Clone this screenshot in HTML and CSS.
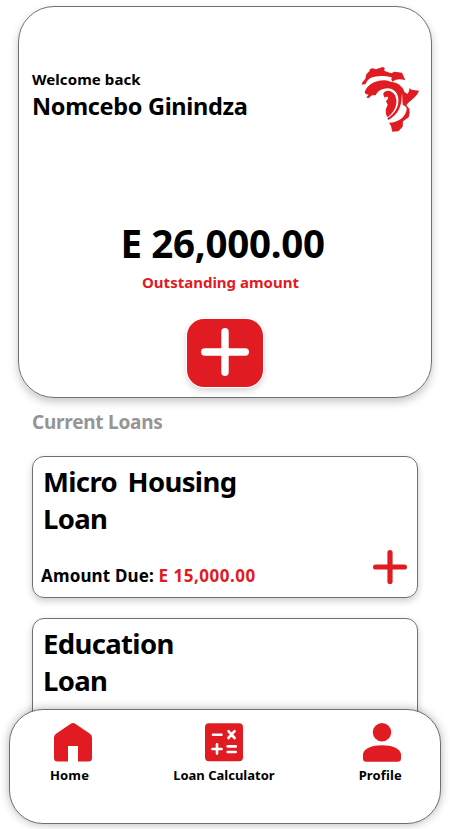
FILE: index.html
```html
<!DOCTYPE html>
<html lang="en">
<head>
<meta charset="utf-8">
<meta name="viewport" content="width=device-width, initial-scale=1">
<title>Loans</title>
<link rel="stylesheet" href="styles.css">
</head>
<body>
<main class="screen">
  <section class="hero">
    <header class="hero-head">
      <div>
        <p class="welcome">Welcome back</p>
        <h1 class="name">Nomcebo Ginindza</h1>
      </div>
      <svg class="logo" viewBox="33 33 180 201" aria-hidden="true">
        <path d="M35 89L37 82L46 71L49 58L58 49L60 42L67 40L78 43L98 36L104 38L103 47L110 50L124 55L133 50L145 52L156 53L160 62L166 76C153 71 139 71 128 80L124 74L125 67C100 60 72 62 58 71Q50 77 47 87Z"/>
        <path d="M44 111C50 93 72 76 103 76C115 76 121 82 127 81C143 84 155 90 157 104L155 126C155 156 142 180 115 195L112 190C136 175 147 153 145 131C143 112 130 101 113 100C94 101 83 109 77 121L66 121L55 130L49 127L56 119L47 117Z"/>
        <path d="M100 115C106 103 127 105 135 121C145 143 137 168 113 187L108 178L107 164L113 149L108 139L114 131C116 123 109 124 104 128Q99 122 100 115Z"/>
        <path d="M155 94L164 112L173 117L177 108L179 99L184 104L207 107C201 124 187 132 175 143L169 151L178 161L179 174L176 187L159 199L158 215L145 229L127 230L123 213L117 203C148 202 166 185 170 164C172 155 164 153 158 149Z"/>
      </svg>
    </header>
    <p class="total">E 26,000.00</p>
    <p class="total-label">Outstanding amount</p>
    <button class="add" aria-label="Add loan">
      <svg viewBox="0 0 48 48" aria-hidden="true"><path d="M24 3.7V44.3M3.7 24H44.3"/></svg>
    </button>
  </section>

  <h2 class="section-title">Current Loans</h2>

  <section class="loans">
    <article class="loan">
      <h3 class="loan-name">Micro Housing<br>Loan</h3>
      <p class="due">Amount Due: <span>E 15,000.00</span></p>
      <svg class="more" viewBox="0 0 34 34" aria-hidden="true"><path d="M17 2.6V31.4M2.6 17H31.4"/></svg>
    </article>
    <article class="loan">
      <h3 class="loan-name">Education<br>Loan</h3>
    </article>
  </section>

  <nav class="tabs">
    <a class="tab home">
      <svg viewBox="0 0 38 39" aria-hidden="true"><path d="M16.8.7Q19-.6 21.2.7L36 10.8Q38 12.2 38 14.5V35Q38 38.5 34.5 38.5H24V23H14V38.5H3.5Q0 38.5 0 35V14.5Q0 12.2 2 10.8Z"/></svg>
      <span class="tab-label">Home</span>
    </a>
    <a class="tab">
      <svg viewBox="0 0 38 39" aria-hidden="true"><rect width="38" height="38" y=".2" rx="4"/><path class="sign" d="M8 11.7H16.5M23.4 8.2L29.6 15M29.6 8.2L23.4 15M7.4 26H16.6M12 21.4V30.6M22.7 23.4H30.7M22.7 29H30.7"/></svg>
      <span class="tab-label">Loan Calculator</span>
    </a>
    <a class="tab profile">
      <svg viewBox="0 0 38 39" aria-hidden="true"><circle cx="19" cy="9.3" r="9.2"/><path d="M0 31C1 25.5 9 22.3 19 22.3S37 25.5 38 31V35.5Q38 38.8 34.6 38.8H3.4Q0 38.8 0 35.5Z"/></svg>
      <span class="tab-label">Profile</span>
    </a>
  </nav>
</main>
</body>
</html>
```
FILE: styles.css
```css
* { box-sizing: border-box; margin: 0; padding: 0; }

body {
  background: #fff;
  color: #000;
  font-family: "Noto Sans", "Open Sans", sans-serif;
  font-weight: 700;
  overflow: hidden;
}

h1, h2, h3 { font-weight: 700; }

svg { display: block; fill: #e11b22; flex: none; }

.screen {
  position: relative;
  width: 450px;
  height: 829px;
  padding: 6px 18px 0;
  overflow: hidden;
}

.hero {
  display: flex;
  flex-direction: column;
  align-items: center;
  height: 392px;
  padding: 59px 12px 0 13px;
  border: 1px solid #707070;
  border-radius: 36px;
  box-shadow: 0 4px 9px rgba(0, 0, 0, .22);
  width: 414px;
}

.hero-head {
  display: flex;
  justify-content: space-between;
  align-self: stretch;
  height: 151px;
}

.welcome { margin-top: 3px; font-size: 15px; line-height: 20px; letter-spacing: .08px; }
.name { margin-top: 1px; font-size: 23.5px; line-height: 32px; letter-spacing: -.32px; }
.logo { width: 60px; height: 67px; margin-right: -2px; }
.total { margin-right: 6px; font-size: 38.5px; line-height: 52px; letter-spacing: -.3px; }
.total-label { margin: 3px 10px 0 0; color: #e11b22; font-size: 15px; line-height: 20px; }

.add {
  display: grid;
  place-items: center;
  width: 76px;
  height: 68px;
  margin: 27px 1px 0 0;
  border: 0;
  border-radius: 17px;
  background: #e11b22;
  box-shadow: 0 0 0 1px #fff, 0 3px 7px rgba(0, 0, 0, .2);
}

.add svg { width: 48px; height: 48px; margin-bottom: 2px; }
.add path { stroke: #fff; stroke-width: 7.4; stroke-linecap: round; }

.section-title {
  margin: 10px 0 0 14px;
  color: #959595;
  font-size: 19px;
  line-height: 28px;
  letter-spacing: -.25px;
}

.loans {
  display: flex;
  flex-direction: column;
  gap: 20px;
  margin: 20px 14px 0;
}

.loan {
  display: grid;
  grid-template-columns: 1fr auto;
  grid-template-rows: 74px 1fr;
  height: 142px;
  padding: 6px 10px 9px 8px;
  border: 1px solid #707070;
  border-radius: 12px;
  box-shadow: 0 3px 7px rgba(0, 0, 0, .2);
}

.loan-name {
  grid-column: 1 / -1;
  padding-left: 2px;
  font-size: 27.5px;
  line-height: 37px;
  letter-spacing: -.65px;
  word-spacing: 4px;
}

.due { align-self: end; font-size: 17px; line-height: 24px; letter-spacing: .15px; }
.due span { color: #e11b22; letter-spacing: .5px; }
.more { width: 34px; height: 34px; align-self: end; margin-bottom: 4px; }
.more path { stroke: #e11b22; stroke-width: 5.2; stroke-linecap: round; }

.tabs {
  position: absolute;
  left: 9px;
  top: 709px;
  display: flex;
  justify-content: space-between;
  width: 432px;
  height: 115px;
  padding: 13px 38px 0 40px;
  border: 1px solid #707070;
  border-radius: 34px;
  background: #fff;
  box-shadow: 0 0 10px rgba(0, 0, 0, .3);
}

.tab { display: flex; flex-direction: column; align-items: center; }
.tab svg { width: 38px; height: 39px; }
.home svg { margin: 0 -3px 0 3px; }
.profile svg { margin: 0 -1px 0 2px; }
.tab-label { margin-top: 4px; font-size: 13px; line-height: 18px; }
.home .tab-label, .profile .tab-label { letter-spacing: .15px; }
.sign { fill: none; stroke: #fff; stroke-width: 2.6; stroke-linecap: round; }
```
